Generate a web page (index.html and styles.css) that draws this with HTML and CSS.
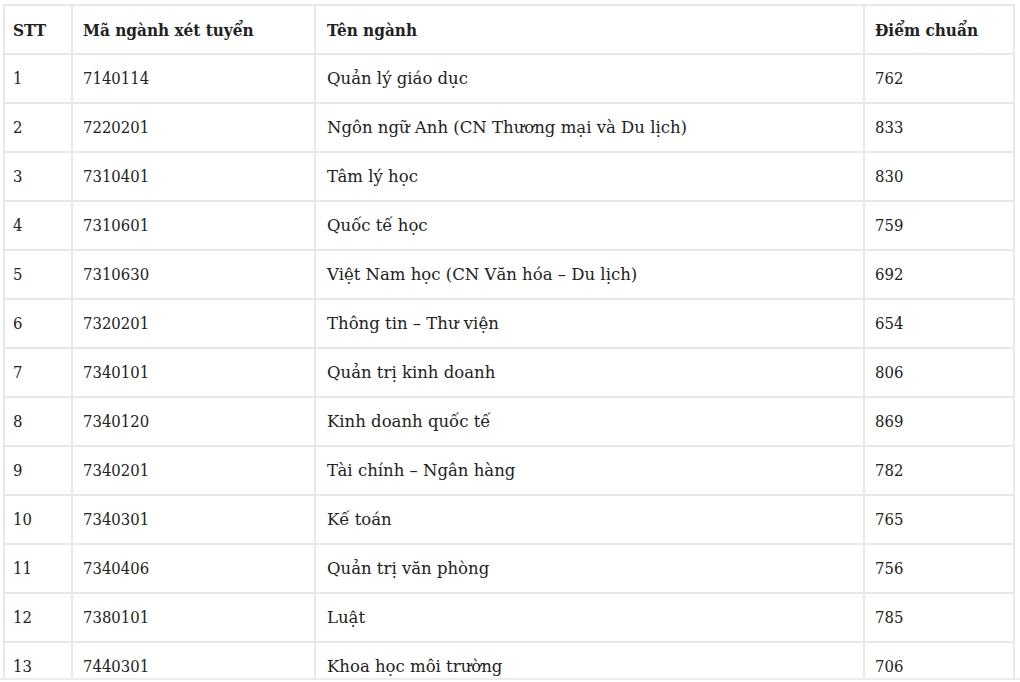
FILE: index.html
```html
<!DOCTYPE html>
<html lang="vi">
<head>
<meta charset="utf-8">
<link rel="stylesheet" href="styles.css">
</head>
<body>
<div class="frame">
<table class="scores">
<colgroup><col class="c1"><col class="c2"><col class="c3"><col class="c4"></colgroup>
<thead>
<tr><th class="idx">STT</th><th>Mã ngành xét tuyển</th><th class="name">Tên ngành</th><th>Điểm chuẩn</th></tr>
</thead>
<tbody>
<tr><td class="num idx">1</td><td class="num">7140114</td><td class="name">Quản lý giáo dục</td><td class="num">762</td></tr>
<tr><td class="num idx">2</td><td class="num">7220201</td><td class="name">Ngôn ngữ Anh (CN Thương mại và Du lịch)</td><td class="num">833</td></tr>
<tr><td class="num idx">3</td><td class="num">7310401</td><td class="name">Tâm lý học</td><td class="num">830</td></tr>
<tr><td class="num idx">4</td><td class="num">7310601</td><td class="name">Quốc tế học</td><td class="num">759</td></tr>
<tr><td class="num idx">5</td><td class="num">7310630</td><td class="name">Việt Nam học (CN Văn hóa – Du lịch)</td><td class="num">692</td></tr>
<tr><td class="num idx">6</td><td class="num">7320201</td><td class="name">Thông tin – Thư viện</td><td class="num">654</td></tr>
<tr><td class="num idx">7</td><td class="num">7340101</td><td class="name">Quản trị kinh doanh</td><td class="num">806</td></tr>
<tr><td class="num idx">8</td><td class="num">7340120</td><td class="name">Kinh doanh quốc tế</td><td class="num">869</td></tr>
<tr><td class="num idx">9</td><td class="num">7340201</td><td class="name">Tài chính – Ngân hàng</td><td class="num">782</td></tr>
<tr><td class="num idx">10</td><td class="num">7340301</td><td class="name">Kế toán</td><td class="num">765</td></tr>
<tr><td class="num idx">11</td><td class="num">7340406</td><td class="name">Quản trị văn phòng</td><td class="num">756</td></tr>
<tr><td class="num idx">12</td><td class="num">7380101</td><td class="name">Luật</td><td class="num">785</td></tr>
<tr><td class="num idx">13</td><td class="num">7440301</td><td class="name">Khoa học môi trường</td><td class="num">706</td></tr>
</tbody>
</table>
</div>
</body>
</html>
```
FILE: styles.css
```css
html, body { margin: 0; padding: 0; background: #fff; }
.frame {
  height: 680px;
  overflow: hidden;
  border-bottom: 2px solid #ececec;
  padding: 4px 0 0 3px;
  box-sizing: border-box;
}
.scores {
  border-collapse: collapse;
  width: 1010px;
  table-layout: fixed;
  font-family: "DejaVu Serif", serif;
  font-size: 16.5px;
  color: #222;
}
.c1 { width: 68px; }
.c2 { width: 243px; }
.c3 { width: 549px; }
.c4 { width: 150px; }
.scores th, .scores td {
  border: 2px solid #e8e8e8;
  height: 49px;
  box-sizing: border-box;
  padding: 0 10px;
  text-align: left;
  vertical-align: middle;
  white-space: nowrap;
}
.scores th {
  font-family: "DejaVu Serif Condensed", "DejaVu Serif", serif;
  font-size: 17px;
  font-weight: bold;
}
.scores .num {
  font-family: "DejaVu Serif Condensed", "DejaVu Serif", serif;
}
.scores .idx { padding-left: 8px; }
.scores .name { padding-left: 11px; }
```
